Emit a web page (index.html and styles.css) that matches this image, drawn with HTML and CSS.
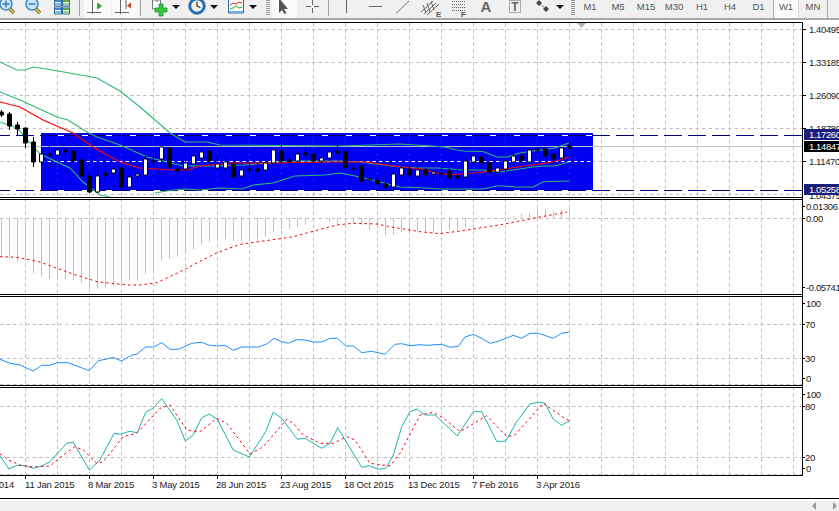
FILE: index.html
```html
<!DOCTYPE html>
<html lang="en">
<head>
<meta charset="utf-8">
<title>Chart</title>
<link rel="stylesheet" href="styles.css">
</head>
<body>
<div class="app">
  <header class="toolbar">
    <div class="tool w20"><svg width="20" height="18" viewBox="0 0 20 18"><circle cx="6" cy="4" r="6" fill="#cfe6f7" stroke="#3f86c4" stroke-width="1.5"/><path d="M2.500 4h7M6 .5v7" stroke="#2a7fc0" stroke-width="1.5"/><path d="M10 9l4 4" stroke="#7a6420" stroke-width="3.4"/><path d="M10 9l4 4" stroke="#f0d060" stroke-width="1.6"/></svg></div>
    <div class="tool w26"><svg width="26" height="18" viewBox="0 0 26 18"><circle cx="12" cy="4" r="6" fill="#cfe6f7" stroke="#3f86c4" stroke-width="1.5"/><path d="M8.500 4h7" stroke="#2a7fc0" stroke-width="1.5"/><path d="M16 9l4 4" stroke="#7a6420" stroke-width="3.4"/><path d="M16 9l4 4" stroke="#f0d060" stroke-width="1.6"/></svg></div>
    <div class="tool w32"><svg width="32" height="18" viewBox="0 0 32 18"><path d="M8.500 -1h7v7h-7zM16.500 -1h7v7h-7zM8.500 7h7v7h-7zM16.500 7h7v7h-7z" fill="#fff" stroke="#2c6a9c"/><path d="M9 0h6v2h-6zM9 8h6v2h-6z" fill="#3a86d8"/><path d="M17 0h6v2h-6zM17 8h6v2h-6z" fill="#58a848"/><path d="M9 3h6v2h-6zM9 11h6v2h-6z" fill="#7ab4e8"/><path d="M17 3h6v2h-6zM17 11h6v2h-6z" fill="#9ad08a"/></svg></div>
    <div class="sep"></div>
    <div class="tool w27 on"><svg width="27" height="18" viewBox="0 0 27 18"><path d="M8.500 0v14M3 12.500h14" stroke="#666" fill="none"/><path d="M13.500 3l4 3-4 3z" fill="#22b522" stroke="#128012" stroke-width=".6"/></svg></div>
    <div class="tool w26 on ml1"><svg width="26" height="18" viewBox="0 0 26 18"><path d="M8.500 0v14M14 0v9M3 12.500h14" stroke="#666" fill="none"/><path d="M15 5.500l4-3v6z" fill="#d8401a"/></svg></div>
    <div class="sep ml2"></div>
    <div class="tool w24 ml1"><svg width="24" height="18" viewBox="0 0 24 18"><path d="M6.500 0h8v9h-8z" fill="#fff" stroke="#777"/><path d="M10 -1h2v3h-2z" fill="#999"/><path d="M10 8h4V4h4v4h4v4h-4v4h-4v-4h-4z" transform="translate(-1 0)" fill="#32c83c" stroke="#1a8a28" stroke-width=".7"/></svg></div>
    <div class="tool w11"><span class="drop"></span></div>
    <div class="tool w22 ml5"><svg width="22" height="18" viewBox="0 0 22 18"><circle cx="11" cy="6" r="7" fill="#f4f4ee" stroke="#1f6fb5" stroke-width="2.4"/><circle cx="11" cy="6" r="8.400" fill="none" stroke="#0f4a80" stroke-width=".6"/><path d="M11 1.500V6l3.500 1.500" stroke="#333" stroke-width="1.200" fill="none"/></svg></div>
    <div class="tool w11"><span class="drop"></span></div>
    <div class="tool w22 ml6"><svg width="22" height="18" viewBox="0 0 22 18"><path d="M3.500 -1h15v14h-15z" fill="#f8f8f8" stroke="#2a6ca8"/><path d="M4 11h14v1.500H4z" fill="#6ab0e0"/><path d="M5 5l3-2 3 1 3-2 3 1" stroke="#d83a20" fill="none"/><path d="M5 9l3-1 3-2 3 2 3-1" stroke="#3fa83a" fill="none"/></svg></div>
    <div class="tool w11"><span class="drop"></span></div>
    <div class="grip ml8"></div>
    <div class="tool w25 on ml2"><svg width="25" height="18" viewBox="0 0 25 18"><path d="M7 -2v15l3-3 2.500 4 2-1-2.500-4h4z" fill="#555"/></svg></div>
    <div class="tool w25 ml3"><svg width="25" height="18" viewBox="0 0 25 18"><path d="M12.500 0v5M12.500 8v5M6 6.500h5M14 6.500h5" stroke="#666" fill="none"/></svg></div>
    <div class="sep ml3"></div>
    <div class="tool w26"><svg width="26" height="18" viewBox="0 0 26 18"><path d="M13.500 0v13" stroke="#666"/></svg></div>
    <div class="tool w26 ml3"><svg width="26" height="18" viewBox="0 0 26 18"><path d="M7 6.500h13" stroke="#666"/></svg></div>
    <div class="tool w26 ml1"><svg width="26" height="18" viewBox="0 0 26 18"><path d="M7 13.500L20 1" stroke="#777" fill="none"/></svg></div>
    <div class="tool w28 ml3"><svg width="28" height="18" viewBox="0 0 28 18"><path d="M3 12L15 1M6 14L18 3M9 15L21 4M5 5l3 8M9 3l3 9M13 1l3 9" stroke="#666" fill="none"/><text class="tag" x="18" y="17">E</text></svg></div>
    <div class="tool w26"><svg width="26" height="18" viewBox="0 0 26 18"><path d="M6 1.500h13M6 4.500h13M6 7.500h13M6 10.500h13" stroke="#666" stroke-dasharray="1 1" fill="none"/><text class="tag" x="15" y="17">F</text></svg></div>
    <div class="tool w26 ml1"><svg width="26" height="18" viewBox="0 0 26 18"><text class="big" x="13" y="12">A</text></svg></div>
    <div class="tool w26 ml3"><svg width="26" height="18" viewBox="0 0 26 18"><path d="M7.500 .5h11v12h-11z" fill="none" stroke="#666" stroke-dasharray="1 1"/><text class="big mid" x="13" y="11">T</text></svg></div>
    <div class="tool w25 ml2"><svg width="25" height="18" viewBox="0 0 25 18"><path d="M9 0l3 3-3 3-3-3zM16 6l3 3-3 3-3-3z" fill="#444"/><path d="M11 5l4 3" stroke="#888" fill="none"/></svg></div>
    <div class="tool w10"><span class="drop"></span></div>
    <div class="grip ml6"></div>
    <div class="frames">
      <div class="tf">M1</div><div class="tf">M5</div><div class="tf">M15</div><div class="tf">M30</div><div class="tf">H1</div><div class="tf">H4</div><div class="tf tf-d1">D1</div><div class="tf active">W1</div><div class="tf mn">MN</div>
    </div>
  </header>

  <svg class="chart" width="839" height="480" viewBox="0 20 839 480">
    <g class="grid">
      <path d="M25.500 23V475M57.500 23V475M89.500 23V475M121.500 23V475M153.500 23V475M185.500 23V475M217.500 23V475M249.500 23V475M281.500 23V475M313.500 23V475M345.500 23V475M377.500 23V475M409.500 23V475M441.500 23V475M473.500 23V475M505.500 23V475M537.500 23V475M569.500 23V475M601.500 23V475M633.500 23V475M665.500 23V475M697.500 23V475M729.500 23V475M761.500 23V475M793.500 23V475"/>
      <path d="M0 29.500H802M0 62.500H802M0 95.500H802M0 128.500H802M0 161.500H802M0 194.500H802M0 218.500H802M0 324.500H802M0 358.500H802M0 384.500H802M0 406.500H802M0 457.500H802M0 474.500H802"/>
    </g>
    <rect class="zone" x="41" y="133" width="552" height="57"/>
    <path class="zone-grid" d="M57.500 133V190M89.500 133V190M121.500 133V190M153.500 133V190M185.500 133V190M217.500 133V190M249.500 133V190M281.500 133V190M313.500 133V190M345.500 133V190M377.500 133V190M409.500 133V190M441.500 133V190M473.500 133V190M505.500 133V190M537.500 133V190M569.500 133V190"/>
    <path class="zone-dash" d="M41 161.500H593"/>
    <path class="white-base" d="M41 135.500H593M41 190.500H593"/>
    <path class="level" d="M0 135.500H802M0 190.500H802"/>
    <path class="bid" d="M0 146.500H802"/>

    <polyline class="band" points="0,62 17,70 25,70 33,67 47,69 97,78 120,91 140,107 170,133 185,142 207,142 220,145 340,146 400,144 428,145.700 445,147 457,150 463,151 483,151.500 497,157 507,157 520,153 533,151 555,148 569,143"/>
    <polyline class="band" points="0,92 20,100 57,117 68,120 87,132 97,137 120,145 147,157 183,166 213,166 243,165 280,162 300,161 340,161 360,162 400,167 420,168 438,168 463,170 483,170 500,172 533,167 543,166 555,166 569,162"/>
    <polyline class="band" points="0,122 17,128 40,154 70,168 83,182 100,195 110,197"/>
    <polyline class="band" points="155,193 173,190 185,189 200,190 220,188 242,189 253,185 273,183 295,176 325,175 340,173 360,177 400,187 427,188 438,189 483,189 497,186 503,186 517,187 533,187 543,182 550,181.500 569,181"/>
    <polyline class="ma" points="0,102 20,107 43,120 73,133 93,147 120,162 140,168 173,170 187,170 200,166 233,163 267,163 333,162 367,162 400,167 422,169 437,173 450,175 473,173 500,170 517,167 540,164 557,161 569,157"/>

    <path class="wick" d="M1.500 110V117M9.500 112V130M17.500 122V136M25.500 128V148M33.500 137V167M41.500 147V165M49.500 144V158M57.500 148V157M65.500 147V157M73.500 150V162M81.500 157V177M89.500 172V193M97.500 166V193M105.500 166V180M113.500 167V182M121.500 166V189M129.500 175V190M137.500 170V183M145.500 156V177M153.500 150V167M161.500 147V163M169.500 147V168M177.500 165V177M185.500 148V175M193.500 150V165M201.500 148V160M209.500 150V163M217.500 155V170M225.500 158V173M233.500 163V177M241.500 168V178M249.500 162V175M257.500 163V175M265.500 158V172M273.500 150V167M281.500 135V163M289.500 153V165M297.500 153V163M305.500 147V158M313.500 153V164M321.500 153V163M329.500 150V161M337.500 145V154M345.500 150V168M353.500 163V174M361.500 165V182M369.500 175V184M377.500 178V185M385.500 183V189M393.500 167V190M401.500 167V178M409.500 166V178M417.500 167V178M425.500 168V177M433.500 170V182M441.500 167V178M449.500 168V179M457.500 169V179M465.500 158V178M473.500 153V165M481.500 157V166M489.500 162V172M497.500 166V177M505.500 158V177M513.500 152V166M521.500 154V162M529.500 148V163M537.500 147V154M545.500 148V158M553.500 152V162M561.500 148V160M569.500 140V149"/>
    <path class="body-b" d="M-.5 112h4v3h-4zM7.500 114h4v12h-4zM15.500 125h4v4h-4zM23.500 128h4v15h-4zM31.500 142h4v20h-4zM47.500 154h4v1h-4zM63.500 150h4v2h-4zM71.500 151h4v10h-4zM79.500 160h4v16h-4zM87.500 176h4v16h-4zM103.500 173h4v2h-4zM119.500 168h4v19h-4zM151.500 161h4v1h-4zM167.500 148h4v19h-4zM175.500 169h4v2h-4zM207.500 151h4v10h-4zM231.500 164h4v13h-4zM247.500 169h4v1h-4zM255.500 169h4v2h-4zM279.500 151h4v10h-4zM287.500 160h4v2h-4zM303.500 153h4v2h-4zM311.500 154h4v7h-4zM335.500 151h4v2h-4zM343.500 152h4v16h-4zM351.500 168h4v1h-4zM359.500 166h4v15h-4zM375.500 180h4v4h-4zM383.500 184h4v3h-4zM407.500 169h4v6h-4zM423.500 170h4v5h-4zM439.500 173h4v1h-4zM447.500 171h4v7h-4zM455.500 176h4v2h-4zM479.500 157h4v6h-4zM487.500 163h4v9h-4zM519.500 156h4v5h-4zM535.500 149h4v1h-4zM543.500 149h4v7h-4zM551.500 154h4v5h-4zM567.500 146h4v2h-4z"/>
    <path class="body-w" d="M39.500 154h4v8h-4zM55.500 150h4v5h-4zM95.500 176h4v16h-4zM111.500 169h4v4h-4zM127.500 177h4v10h-4zM135.500 174h4v2h-4zM143.500 159h4v16h-4zM159.500 147h4v12h-4zM183.500 163h4v6h-4zM191.500 156h4v8h-4zM199.500 152h4v6h-4zM215.500 164h4v4h-4zM223.500 162h4v6h-4zM239.500 170h4v6h-4zM263.500 163h4v7h-4zM271.500 150h4v13h-4zM295.500 154h4v7h-4zM319.500 158h4v3h-4zM327.500 152h4v6h-4zM367.500 179h4v1h-4zM391.500 174h4v13h-4zM399.500 168h4v7h-4zM415.500 170h4v6h-4zM431.500 172h4v2h-4zM463.500 161h4v16h-4zM471.500 156h4v6h-4zM495.500 168h4v4h-4zM503.500 161h4v8h-4zM511.500 156h4v6h-4zM527.500 150h4v12h-4zM559.500 148h4v10h-4z"/>

    <path class="hist" d="M1.500 218V256.700M9.500 218V258.300M17.500 218V261.700M25.500 218V260M33.500 218V273.300M41.500 218V276.700M49.500 218V279M57.500 218V276M65.500 218V279M73.500 218V280M81.500 218V282.700M89.500 218V288.700M97.500 218V288.700M105.500 218V287.700M113.500 218V286M121.500 218V285M129.500 218V280.700M137.500 218V280.700M145.500 218V273.700M153.500 218V271M161.500 218V260.700M169.500 218V259M177.500 218V256.700M185.500 218V254M193.500 218V249M201.500 218V244.700M209.500 218V241.700M217.500 218V240.700M225.500 218V239.300M233.500 218V241M241.500 218V241.700M249.500 218V240.700M257.500 218V239.300M265.500 218V236.700M273.500 218V232M281.500 218V229.300M289.500 218V229M297.500 218V227.300M305.500 218V224M313.500 218V221.700M321.500 218V219.300M329.500 218V221.700M337.500 218V224.700M345.500 218V223.300M353.500 218V223.300M361.500 218V225M369.500 218V230M377.500 218V225M385.500 218V235.700M393.500 218V235M401.500 218V232.300M409.500 218V232.300M417.500 218V231.700M425.500 218V231.700M433.500 218V233.300M441.500 218V234.300M449.500 218V230M457.500 218V229.300M465.500 218V227.300M473.500 218V223.300M481.500 218V220.700M505.500 218V217M513.500 218V216M521.500 218V214M529.500 218V212.700M537.500 218V209.300M545.500 218V209.300M553.500 218V210.700M561.500 218V210M569.500 218V208.300"/>
    <polyline class="signal" points="0,256.700 17,257.300 40,262 57,268.300 73,274 97,281.700 127,285 140,285 157,282.700 180,271.700 217,252.700 240,244.300 280,238.700 293,236.700 313,231.300 337,225 353,223.300 377,224 393,227.300 420,231.700 440,233.700 467,230 503,224.300 533,218.300 567,212"/>

    <polyline class="rsi" points="0,359.300 10,363.300 20,365 33.300,371 41.700,365.300 50,365.300 56.700,362.700 68.300,362.700 80,367.300 89.300,370.700 98.300,360.700 106.700,359 112.700,357.300 121.700,361 131.700,355 136.700,354.300 145.700,347 153.300,347 161.700,342.700 170,349.300 178.300,349.300 191.700,343.300 201.700,342.300 208.300,345 216.700,346 225,345.300 233.300,350.300 241.700,347 258.300,347 266.700,344 274,338.300 281.700,341.700 288.300,343.300 296.700,339.700 305,340 313.300,342 321.700,342 330,338.300 337.300,338.300 345.700,346 353.300,346 361.700,352.700 371.700,351.300 385,354.300 395,344.300 401.700,343.700 410,345.700 420,344.700 427,345.300 441.700,344.300 450,347.300 458.300,346.300 465,337 473.300,334.300 481.700,338.300 490,343.300 498.300,341.300 513.300,335.300 521.700,338.300 530,333.300 538.300,333.300 553.300,338.300 561.700,333.300 569.300,332"/>

    <polyline class="stoch" points="0,456 9,469 16.700,465.300 25,465.700 33.300,468.300 41.700,466 50,461.700 66.700,443.300 73.300,442.300 89.300,470 100,460 114,433.300 120.700,434.300 129.300,431.300 137.300,432.700 145.700,412.300 153.300,408 161.700,398.700 176.700,420 185.300,441 193.300,435 201.700,417.700 209.300,414 217.300,419.300 233.300,450 249.300,457 265.700,431.700 273.300,412 281.700,418.300 297.300,439.300 305,438.300 321.700,448.300 330,443.300 337.700,427.700 361.700,467.300 369.300,465.700 378.300,469.300 385.700,468.300 393.300,455 401.700,426.700 410,411.700 417.300,409 420,411.700 425,415 435,415 457.300,436 473.300,411.700 481.700,411.700 496.700,441.300 505.700,441.300 516.700,421.700 530,404 538.300,402.300 545,403.300 553.300,419.300 561.700,425.300 569.300,420.700"/>
    <polyline class="signal" points="0,454 8.300,460 20,465 33.300,467 50,466 63.300,455 75,446.700 83.300,450 96.700,463.300 103.300,461.700 123.300,436.700 136.700,433.300 160,408.300 170,405 186.700,430 200,431.700 216.700,418.300 226.700,423.300 250,454 263.300,446.700 286.700,419.300 293.300,423.300 303.300,435 320,443.300 333.300,443.300 346.700,436.700 355,440 370,463.300 390,466 400,453.300 420,415 433.300,412.300 445,419.300 460,431.700 486.700,415.700 506.700,436.700 515,435 543.300,403.300 563.300,417.300 569.300,420.700"/>

    <path class="shift" d="M577 23h9l-4.500 5z"/>

    <path class="frame" d="M0 22.500H802.500V475.500H0M0 197.500H802M0 199.500H802M0 294.500H802M0 296.500H802M0 385.500H802M0 387.500H802"/>
    <path class="frame" d="M802 29.500h4M802 62.500h4M802 95.500h4M802 128.500h4M802 161.500h4M802 206.500h3M802 218.500h3M802 287.500h3M802 303.500h3M802 324.500h3M802 358.500h3M802 378.500h3M802 394.500h3M802 406.500h3M802 457.500h3M802 468.500h3M25.500 475v4M89.500 475v4M153.500 475v4M217.500 475v4M281.500 475v4M345.500 475v4M409.500 475v4M473.500 475v4M537.500 475v4"/>

    <g class="axis nums">
      <text x="809" y="33">1.40495</text>
      <text x="809" y="66">1.33185</text>
      <text x="809" y="99">1.26090</text>
      <text x="809" y="132">1.18780</text>
      <text x="809" y="165">1.11470</text>
      <text x="809" y="199">1.04375</text>
      <text x="806" y="210">0.01306</text>
      <text x="806" y="222">0.00</text>
      <text x="806" y="291">-0.05741</text>
      <text x="806" y="307">100</text>
      <text x="805" y="328">70</text>
      <text x="805" y="362">30</text>
      <text x="806" y="382">0</text>
      <text x="806" y="398">100</text>
      <text x="805" y="410">80</text>
      <text x="805" y="461">20</text>
      <text x="806" y="472">0</text>
    </g>
    <rect class="tag-navy" x="804" y="129" width="35" height="11"/>
    <rect class="tag-black" x="804" y="141" width="35" height="11"/>
    <rect class="tag-navy" x="804" y="184" width="35" height="11"/>
    <g class="axis nums inv">
      <text x="809" y="138">1.17260</text>
      <text x="809" y="150">1.14847</text>
      <text x="809" y="193">1.05258</text>
    </g>
    <g class="axis dates">
      <text x="14" y="488" text-anchor="end">16 Nov 2014</text>
      <text x="25" y="488">11 Jan 2015</text>
      <text x="88" y="488">8 Mar 2015</text>
      <text x="152" y="488">3 May 2015</text>
      <text x="216" y="488">28 Jun 2015</text>
      <text x="280" y="488">23 Aug 2015</text>
      <text x="344" y="488">18 Oct 2015</text>
      <text x="408" y="488">13 Dec 2015</text>
      <text x="472" y="488">7 Feb 2016</text>
      <text x="536" y="488">3 Apr 2016</text>
    </g>
    <path class="frame" d="M0 498.500H839"/>
  </svg>

  <footer class="status">
    <svg width="8" height="8" viewBox="0 0 8 8"><path d="M5 0v8L1 4z" fill="#999"/></svg>
    <svg width="8" height="8" viewBox="0 0 8 8"><path d="M3 0v8l4-4z" fill="#999"/></svg>
  </footer>
</div>
</body>
</html>
```

FILE: styles.css
```css
html, body {
  margin: 0;
  padding: 0;
  background: #fff;
}
.app {
  width: 839px;
  height: 511px;
  overflow: hidden;
  display: flex;
  flex-direction: column;
  font-family: "Liberation Sans", Arial, sans-serif;
}
.toolbar {
  height: 18px;
  flex: none;
  display: flex;
  align-items: flex-start;
  background: #f0f0f0;
  border-bottom: 2px solid #a8a8a8;
  overflow: hidden;
}
.tool {
  height: 18px;
  flex: none;
  display: flex;
  align-items: flex-start;
  justify-content: center;
}
.tool svg { display: block; }
.w10 { width: 10px; }
.w11 { width: 11px; }
.w20 { width: 20px; }
.w22 { width: 22px; }
.w24 { width: 24px; }
.w25 { width: 25px; }
.w26 { width: 26px; }
.w27 { width: 27px; }
.w28 { width: 28px; }
.w32 { width: 32px; }
.ml1 { margin-left: 1px; }
.ml2 { margin-left: 2px; }
.ml3 { margin-left: 3px; }
.ml5 { margin-left: 5px; }
.ml6 { margin-left: 6px; }
.ml8 { margin-left: 8px; }
.on { background: #fafafa; }
.sep {
  flex: none;
  width: 1px;
  height: 16px;
  margin-right: 4px;
  margin-left: 1px;
  background: #a4a4a4;
}
.sep.ml2 { margin-left: 2px; }
.sep.ml3 { margin-left: 3px; }
.grip {
  flex: none;
  width: 4px;
  height: 16px;
  background: repeating-linear-gradient(#999 0 1px, #f0f0f0 1px 2px);
}
.drop {
  width: 0;
  height: 0;
  margin-top: 5px;
  border-style: solid;
  border-width: 4px 4px 0;
  border-color: #111 transparent transparent;
}
.tag { font: bold 8px "Liberation Sans", sans-serif; fill: #555; }
.big { font: bold 15px "Liberation Sans", sans-serif; fill: #666; text-anchor: middle; }
.big.mid { font-size: 12px; }
.frames { display: flex; flex: none; margin-left: 1px; }
.tf {
  width: 28px;
  height: 18px;
  flex: none;
  text-align: center;
  font-size: 9.500px;
  line-height: 13px;
  color: #555;
}
.tf-d1 { width: 29px; }
.tf.active {
  width: 26px;
  background: #fafafa;
  border-left: 1px solid #a8a8a8;
  border-right: 1px solid #d8d8d8;
  box-sizing: border-box;
}
.tf.mn { border-right: 1px solid #a8a8a8; }
.chart { display: block; flex: none; background: #fff; }
.grid path, .zone-grid {
  fill: none;
  stroke-width: 1;
  stroke-dasharray: 3.500 3;
}
.grid path { stroke: #c0c0c0; }
.zone { fill: #0000f2; }
.zone-grid { stroke: #2020cc; }
.zone-dash { stroke: #fff; stroke-dasharray: 3.500 3; fill: none; }
.white-base { stroke: #fff; fill: none; }
.level { stroke: #00007e; fill: none; stroke-dasharray: 18 6; stroke-dashoffset: 8; }
.bid { stroke: #c0c0c0; fill: none; }
.band { fill: none; stroke: #2eb872; stroke-width: 1.100; }
.ma { fill: none; stroke: #f00; stroke-width: 1.100; }
.wick { stroke: #000; fill: none; }
.body-b { fill: #000; stroke: #000; }
.body-w { fill: #fff; stroke: #000; }
.hist { stroke: #c0c0c0; fill: none; }
.signal { fill: none; stroke: #f00; stroke-dasharray: 2.500 3; }
.rsi { fill: none; stroke: #1e90ff; }
.stoch { fill: none; stroke: #20b2aa; }
.shift { fill: #b4b4b4; }
.frame { fill: none; stroke: #000; stroke-width: 1; }
.axis text {
  font: 9.500px "Liberation Sans", sans-serif;
  fill: #1a1a1a;
}
.axis.nums text { letter-spacing: -0.4px; }
.axis.dates text { letter-spacing: -0.2px; }
.axis.inv text { fill: #fff; }
.tag-navy { fill: #1a1f7a; }
.tag-black { fill: #000; }
.status {
  flex: 1;
  margin-top: 1px;
  background: #f0f0f0;
  display: flex;
  justify-content: flex-end;
  align-items: center;
  gap: 11px;
  padding-right: 1px;
}
```
